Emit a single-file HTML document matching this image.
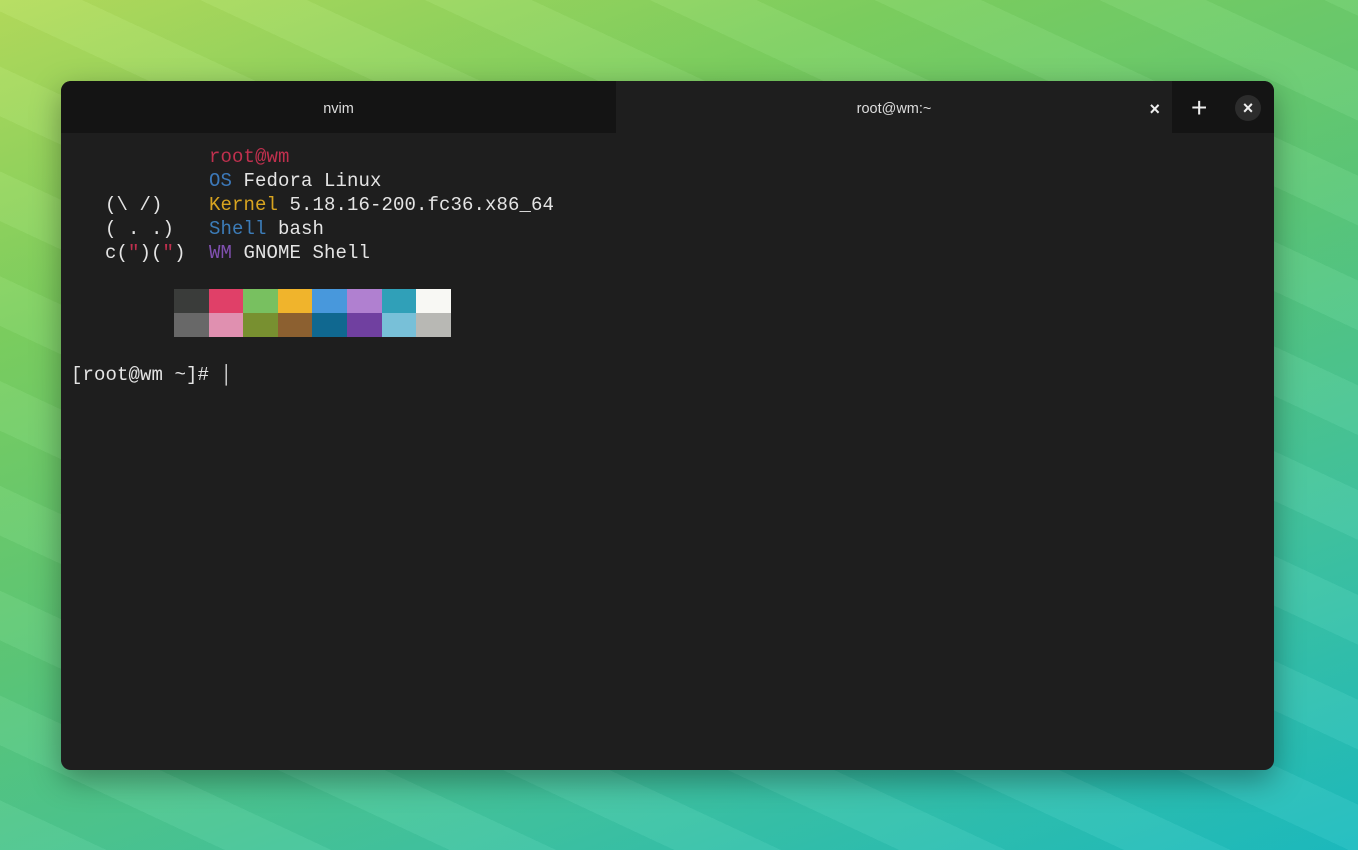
<!DOCTYPE html>
<html><head><style>
html,body{margin:0;width:1358px;height:850px;overflow:hidden}
body{background:linear-gradient(160deg,#b4dc5c 0%,#7cd060 25%,#5cc878 50%,#40c4a0 75%,#1cbcc0 100%);position:relative;font-family:"Liberation Sans",sans-serif}
.stripes{position:absolute;inset:0;background:repeating-linear-gradient(25deg,rgba(255,255,255,0.05) 0 45px,rgba(0,0,0,0.02) 45px 95px)}
.win{position:absolute;left:61px;top:81px;width:1213px;height:689px;background:#1e1e1e;border-radius:10px;overflow:hidden;box-shadow:0 10px 30px rgba(0,0,0,.35)}
.hdr{position:absolute;left:0;top:0;width:1213px;height:52px;background:#141414}
.tab{position:absolute;top:0;height:52px;color:#ddd;font-size:14.5px;line-height:56px;text-align:center}
.t1{left:0;width:555px}
.t2{left:555px;width:556px;background:#1e1e1e}
.mono{position:absolute;font-family:"Liberation Mono",monospace;font-size:19px;letter-spacing:0.1px;line-height:24px;color:#e4e4e4;white-space:pre}
.sw{position:absolute;width:34.6px;height:24px}
</style></head><body>
<div class="stripes"></div>
<div class="win">
 <div class="hdr">
  <div class="tab t1">nvim</div>
  <div class="tab t2">root@wm:~<span style="position:absolute;right:12px;top:0;font-size:18px;font-weight:bold;color:#eee">×</span></div>
  <div style="position:absolute;left:1130px;top:11px;color:#eee;font-size:28px;line-height:32px">+</div>
  <div style="position:absolute;left:1174px;top:14px;width:26px;height:26px;border-radius:13px;background:#2c2c2c;color:#eee;font-size:18px;font-weight:bold;text-align:center;line-height:26px">×</div>
 </div>
</div>
<div class="mono" style="left:209px;top:145px"><span style="color:#c0304e">root@wm</span>
<span style="color:#3c78b8">OS</span> Fedora Linux
<span style="color:#d8a420">Kernel</span> 5.18.16-200.fc36.x86_64
<span style="color:#3c7cb8">Shell</span> bash
<span style="color:#8050b0">WM</span> GNOME Shell</div>
<div class="mono" style="left:105px;top:193px">(\ /)
( . .)
c(<span style="color:#c0304e">"</span>)(<span style="color:#c0304e">"</span>)</div>
<div class="mono" style="left:71px;top:363px">[root@wm ~]# <span style="color:#ddd">│</span></div>
<div class="sw" style="left:174px;top:289px;background:#3a3c3a"></div>
<div class="sw" style="left:208.6px;top:289px;background:#e04068"></div>
<div class="sw" style="left:243.2px;top:289px;background:#78c060"></div>
<div class="sw" style="left:277.8px;top:289px;background:#f0b42c"></div>
<div class="sw" style="left:312.4px;top:289px;background:#4898dc"></div>
<div class="sw" style="left:347px;top:289px;background:#b080d0"></div>
<div class="sw" style="left:381.6px;top:289px;background:#30a0b8"></div>
<div class="sw" style="left:416.2px;top:289px;background:#f8f8f4"></div>
<div class="sw" style="left:174px;top:313px;background:#686868"></div>
<div class="sw" style="left:208.6px;top:313px;background:#e090b0"></div>
<div class="sw" style="left:243.2px;top:313px;background:#789030"></div>
<div class="sw" style="left:277.8px;top:313px;background:#8c6030"></div>
<div class="sw" style="left:312.4px;top:313px;background:#106890"></div>
<div class="sw" style="left:347px;top:313px;background:#7040a0"></div>
<div class="sw" style="left:381.6px;top:313px;background:#78c0d8"></div>
<div class="sw" style="left:416.2px;top:313px;background:#b8b8b4"></div>
</body></html>
